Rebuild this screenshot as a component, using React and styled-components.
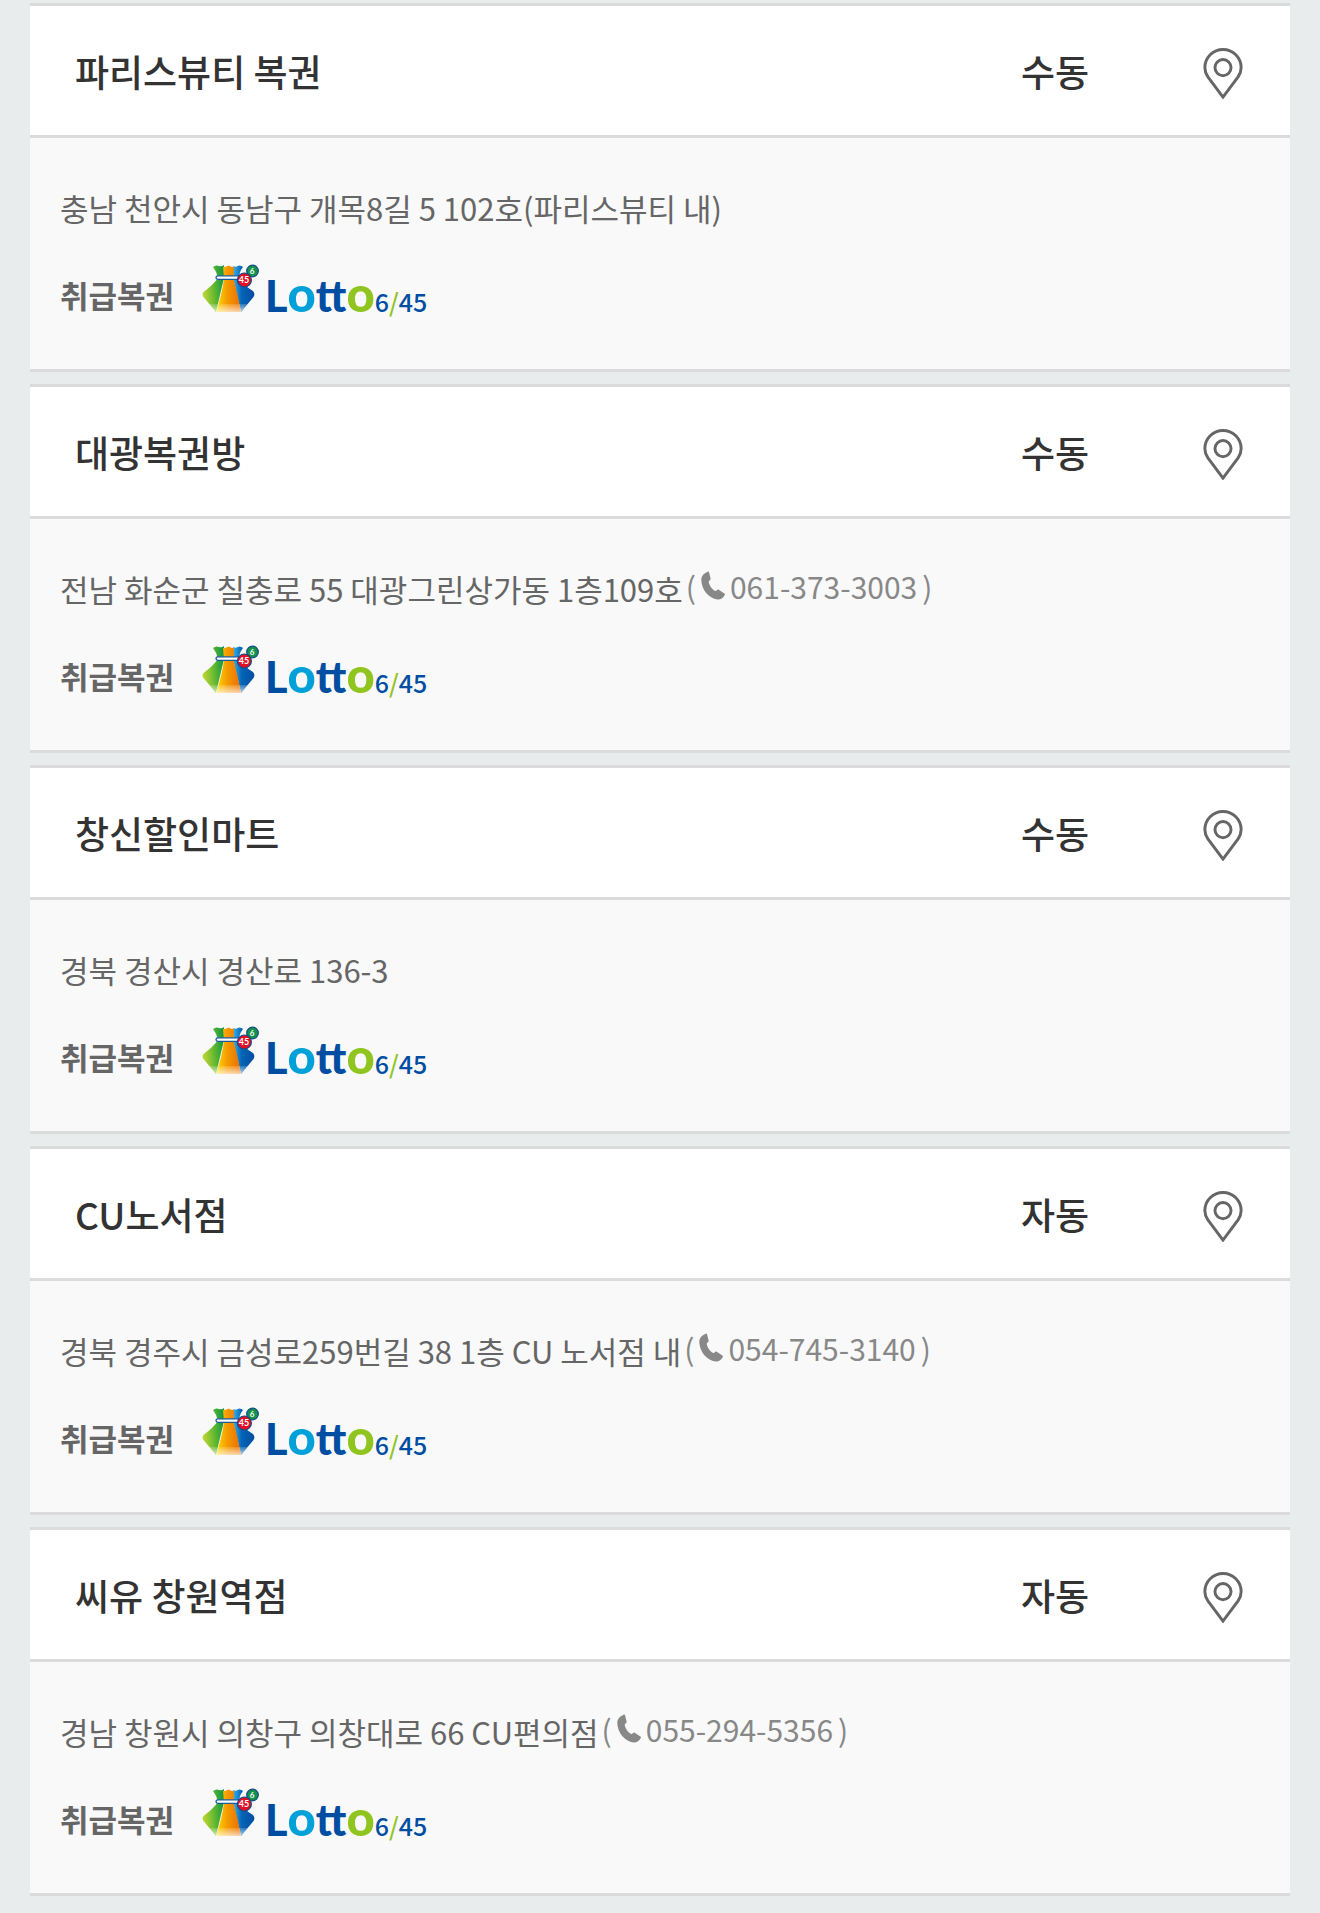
import React from "react";
import styled, { createGlobalStyle } from "styled-components";

const GlobalStyle = createGlobalStyle`
  * {
    box-sizing: border-box;
  }

  body {
    margin: 0;
    background-color: #e8eced;
    font-family: "Noto Sans CJK KR", "Noto Sans", sans-serif;
    color: #666;
  }
`;

const StoreList = styled.ul`
  list-style: none;
  margin: 0;
  padding: 3px 30px 18px;
  display: flex;
  flex-direction: column;
  gap: 12px;
`;

const StoreCard = styled.li`
  border-top: 3px solid #dbdbdb;
  border-bottom: 3px solid #dbdbdb;
`;

const StoreHeader = styled.div`
  display: grid;
  grid-template-columns: 1fr 200px 135px;
  align-items: center;
  height: 132px;
  background-color: #fff;
  border-bottom: 3px solid #dbdbdb;
`;

const StoreName = styled.h2`
  margin: 0;
  padding-left: 45px;
  font-size: 37px;
  line-height: 54px;
  font-weight: 500;
  color: #333;
`;

const BuyType = styled.span`
  font-size: 37px;
  line-height: 54px;
  font-weight: 500;
  color: #333;
  text-align: center;
`;

const MapButton = styled.button`
  display: flex;
  justify-self: center;
  padding: 12px 6px 6px;
  border: none;
  background: none;
  cursor: pointer;
`;

const StoreBody = styled.div`
  padding: 46px 30px 41px;
  background-color: #f9f9f9;
`;

const AddressRow = styled.div`
  display: flex;
  align-items: flex-start;
  gap: 3px;
`;

const Address = styled.p`
  margin: 0;
  font-size: 31px;
  line-height: 48px;
`;

const Phone = styled.span`
  display: flex;
  align-items: center;
  gap: 5px;
  font-size: 30px;
  line-height: 42px;
  color: #888;
`;

const PhoneLink = styled.a`
  display: flex;
  align-items: center;
  gap: 5px;
  color: inherit;
  text-decoration: none;
`;

const LottoRow = styled.div`
  display: flex;
  align-items: center;
  gap: 28px;
  height: 66px;
  margin-top: 30px;
`;

const LottoLabel = styled.strong`
  font-size: 31px;
  line-height: 48px;
  font-weight: 700;
`;

const Logo = styled.span`
  display: flex;
  align-items: baseline;
  line-height: 54px;
  color: #004ea2;
`;

const LogoName = styled.span`
  margin-left: 5px;
  font-family: Lato, sans-serif;
  font-size: 43px;
  font-weight: 900;
`;

const LogoRing = styled.span`
  font-size: 49px;
  color: ${({ color }) => color};
`;

const LogoNumber = styled.span`
  font-size: 25px;
  font-weight: 500;
`;

const LogoSlash = styled.span`
  color: #90c41f;
`;

const stores = [
  {
    name: "파리스뷰티 복권",
    type: "수동",
    address: "충남 천안시 동남구 개목8길 5 102호(파리스뷰티 내)",
  },
  {
    name: "대광복권방",
    type: "수동",
    address: "전남 화순군 칠충로 55 대광그린상가동 1층109호",
    phone: "061-373-3003",
  },
  {
    name: "창신할인마트",
    type: "수동",
    address: "경북 경산시 경산로 136-3",
  },
  {
    name: "CU노서점",
    type: "자동",
    address: "경북 경주시 금성로259번길 38 1층 CU 노서점 내",
    phone: "054-745-3140",
  },
  {
    name: "씨유 창원역점",
    type: "자동",
    address: "경남 창원시 의창구 의창대로 66 CU편의점",
    phone: "055-294-5356",
  },
];

function PinIcon() {
  return (
    <svg width="40" height="51" viewBox="0 0 40 52" fill="none" stroke="#666" strokeWidth="3">
      <path d="M20 50 L4.6 29.5 C2.5 26.5 1.5 23.5 1.5 20 A18.5 18.5 0 0 1 38.5 20 C38.5 23.5 37.5 26.5 35.4 29.5 Z" />
      <circle cx="20" cy="20" r="8.2" />
    </svg>
  );
}

function PhoneIcon() {
  return (
    <svg width="24" height="30" viewBox="0 0 24 30" fill="#888">
      <path d="M6.6 .8 C7.4 .4 7.9 .7 8.1 1.5 L9.6 7.4 C9.8 8.3 9.5 8.8 8.8 9.3 C7.8 10 7.6 10.8 7.9 12 C8.9 15.2 10.6 17.7 13.2 19.5 C14.2 20.2 15 20 15.9 19.2 C16.6 18.5 17.3 18.4 18.1 18.9 L23.4 22.4 C24.1 22.9 24.1 23.5 23.6 24.2 C21.8 27.2 19.6 28.8 16.6 28.6 C7.4 27.2 .8 18.6 .3 9.2 C.2 5.1 2.7 2.4 6.6 .8 Z" />
    </svg>
  );
}

// 복주머니
function BagIcon({ id }) {
  return (
    <svg width="58" height="49" viewBox="0 0 58 49">
      <defs>
        <linearGradient id={`${id}-green`} x1="0" x2="1" y1=".2" y2="0">
          <stop offset="0" stopColor="#b5d334" />
          <stop offset=".5" stopColor="#5cb531" />
          <stop offset="1" stopColor="#079447" />
        </linearGradient>
        <linearGradient id={`${id}-orange`} x1="0" x2="1">
          <stop offset="0" stopColor="#ffdc00" />
          <stop offset=".45" stopColor="#f59a00" />
          <stop offset="1" stopColor="#eb6d00" />
        </linearGradient>
        <linearGradient id={`${id}-blue`} x1="0" x2="1">
          <stop offset="0" stopColor="#38b5e9" />
          <stop offset=".4" stopColor="#0765b6" />
          <stop offset="1" stopColor="#004da1" />
        </linearGradient>
        <linearGradient id={`${id}-shine`} x1="0" x2="0" y1="0" y2="1">
          <stop offset="0" stopColor="#fff" stopOpacity=".15" />
          <stop offset="1" stopColor="#fff" stopOpacity=".7" />
        </linearGradient>
      </defs>
      <path fill={`url(#${id}-green)`} d="M11 4 Q14 1.5 17 3 Q20 4 22 2 L22 15 L14 49 L1.5 34 Q-.3 31.5 1.5 29 Q12 21 16 15 Q15 9 11 4 Z" />
      <path fill={`url(#${id}-blue)`} d="M31 3 Q34 4.5 37 2.5 Q40 2.5 41 4 Q37 9 37 15 Q41 22 51 28 Q53.5 31 51.5 34 L39 49 L31 15 Z" />
      <path fill={`url(#${id}-orange)`} d="M21 4 Q24 4 26.5 2.5 Q29 4 32 4 L31.5 16 Q36 32 39 49 L14 49 Q20 31 22 16 Z" />
      <path fill={`url(#${id}-shine)`} d="M7 41 H46 L39 49 H14 Z" />
      <rect x="14" y="12.8" width="24" height="3.6" rx="1.8" fill="#fff" stroke="#175a99" strokeWidth="1.3" />
      <circle cx="50.5" cy="8" r="5.8" fill="#12924a" stroke="#124b86" strokeWidth="1.2" />
      <circle cx="42.4" cy="17" r="7" fill="#e50f25" stroke="#124b86" strokeWidth="1.2" />
      <g fontFamily="Lato, sans-serif" fontWeight="700" fill="#fff" textAnchor="middle">
        <text x="50" y="11" fontSize="8">
          6
        </text>
        <text x="42" y="20" fontSize="9">
          45
        </text>
      </g>
    </svg>
  );
}

function LottoLogo({ id }) {
  return (
    <Logo>
      <BagIcon id={id} />
      <LogoName>
        L<LogoRing color="#00a0d8">o</LogoRing>tt
        <LogoRing color="#90c41f">o</LogoRing>
      </LogoName>
      <LogoNumber>
        6<LogoSlash>/</LogoSlash>45
      </LogoNumber>
    </Logo>
  );
}

function StoreItem({ id, name, type, address, phone }) {
  return (
    <StoreCard>
      <StoreHeader>
        <StoreName>{name}</StoreName>
        <BuyType>{type}</BuyType>
        <MapButton type="button" aria-label={`${name} 지도 보기`}>
          <PinIcon />
        </MapButton>
      </StoreHeader>
      <StoreBody>
        <AddressRow>
          <Address>{address}</Address>
          {/* 전화번호가 있는 판매점만 표시 */}
          {phone && (
            <Phone>
              (
              <PhoneLink href={`tel:${phone}`}>
                <PhoneIcon />
                {phone}
              </PhoneLink>
              )
            </Phone>
          )}
        </AddressRow>
        <LottoRow>
          <LottoLabel>취급복권</LottoLabel>
          <LottoLogo id={id} />
        </LottoRow>
      </StoreBody>
    </StoreCard>
  );
}

function App() {
  return (
    <>
      <GlobalStyle />
      <StoreList>
        {stores.map((store, index) => (
          <StoreItem key={store.name} id={`lotto${index}`} {...store} />
        ))}
      </StoreList>
    </>
  );
}

export default App;
